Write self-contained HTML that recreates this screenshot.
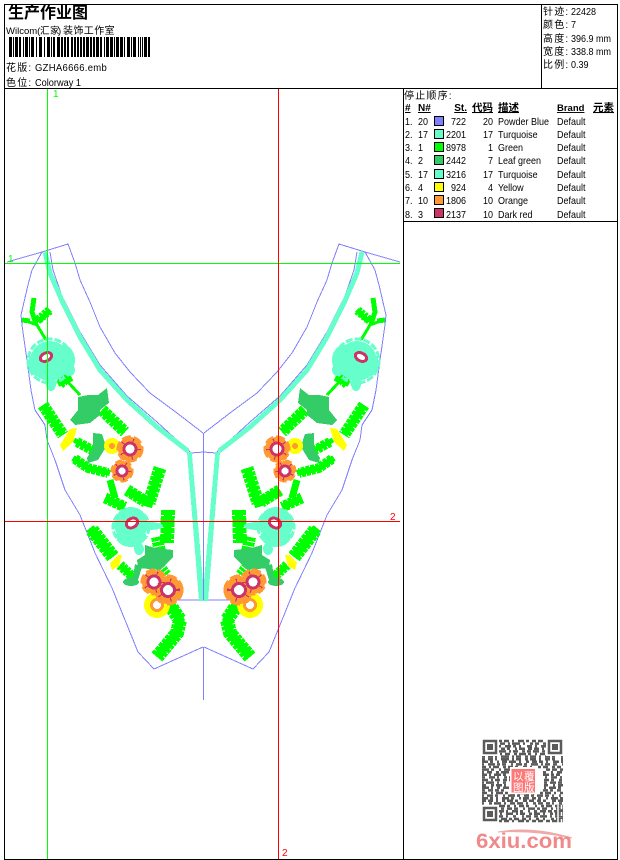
<!DOCTYPE html>
<html>
<head>
<meta charset="utf-8">
<style>
html,body{margin:0;padding:0;background:#fff;width:620px;height:860px;overflow:hidden}
svg{display:block}
text{font-family:"Liberation Sans","WenQuanYi Zen Hei","Noto Sans CJK SC",sans-serif;font-size:10px;fill:#000}
.c{font-size:10px;letter-spacing:1.2px}
.b{font-weight:bold;text-decoration:underline}
.f1{fill:none;stroke:#00ff00;stroke-linecap:butt}
</style>
</head>
<body>
<svg width="620" height="860" viewBox="0 0 620 860" xmlns="http://www.w3.org/2000/svg">
<defs>
<g id="half" shape-rendering="crispEdges">
  <!-- outlines -->
  <g fill="none" stroke="#8080ff" stroke-width="1">
    <polyline points="7,262 42,252 68,244 75,263 80,280 90,302 100,327 115,353 130,372 150,393 177,413 203,433"/>
    <polyline points="42,252 32,270 28,285 21,315 22,325 27,360 31,390 35,410 45,425 47,440 55,460 65,490 80,515 95,553 112,588 138,652 154,669 203,647"/>
    <polyline points="50,252 53,270 62,296 80,332 100,365 127,396 157,422 191,453 204,452"/>
    <line x1="177" y1="600" x2="204" y2="600"/>
  </g>
  <!-- teal band -->
  <polyline fill="none" stroke="#66ffcc" stroke-width="5" points="45,252 50,273 63,303 80,337 100,370 127,400 157,427 188,451"/>
  <polygon fill="#66ffcc" points="187,452 192,452 192,455 203.5,587 203.5,601 199,601"/>

  <!-- ferns: solid core + barbed stroke -->
  <g class="f1">
    <!-- top sprig -->
    <path d="M46 340 L37 325 L24 320" stroke-width="3"/>
    <path d="M22 320 L30 321" stroke-width="5"/>
    <path d="M36 324 L32 312 L34 298" stroke-width="5"/>
    <path d="M38 322 L50 310" stroke-width="5"/>
    <path d="M38 320 L50 310" stroke-width="9" stroke-dasharray="3 1"/>
    <!-- stem under flower 1 -->
    <path d="M66 380 L80 395" stroke-width="3"/>
    <path d="M58 384 L72 378" stroke-width="6"/>
    <path d="M60 384 L70 376" stroke-width="10" stroke-dasharray="3 1"/>
    <!-- right of leaf -->
    <path d="M102 410 L125 432" stroke-width="7"/>
    <path d="M102 410 L125 432" stroke-width="12" stroke-dasharray="4 1"/>
    <!-- far-left fern -->
    <path d="M43 405 L63 435" stroke-width="7"/>
    <path d="M43 405 L63 435" stroke-width="12" stroke-dasharray="4 1"/>
    <!-- mid -->
    <path d="M74 440 L98 453" stroke-width="5"/>
    <path d="M77 442 L94 451" stroke-width="10" stroke-dasharray="4 1"/>
    <path d="M73 458 L88 468 L110 473" stroke-width="6"/>
    <path d="M75 459 L88 468 L108 473" stroke-width="10" stroke-dasharray="4 1"/>
    <!-- upper trio -->
    <path d="M160 468 L148 507" stroke-width="8"/>
    <path d="M160 468 L149 503" stroke-width="13" stroke-dasharray="4 1"/>
    <path d="M127 490 L148 503" stroke-width="8"/>
    <path d="M127 490 L146 502" stroke-width="12" stroke-dasharray="4 1"/>
    <path d="M110 480 L115 498" stroke-width="7"/>
    <path d="M105 498 L125 507" stroke-width="7"/>
    <path d="M105 498 L125 507" stroke-width="11" stroke-dasharray="4 1"/>
    <!-- right of flower 2 -->
    <path d="M168 510 L167 543" stroke-width="8"/>
    <path d="M168 510 L167 543" stroke-width="14" stroke-dasharray="5 1"/>
    <path d="M157 537 L160 552" stroke-width="12" stroke-dasharray="4 1"/>
    <!-- lower-left fern -->
    <path d="M90 528 L113 557" stroke-width="9"/>
    <path d="M92 530 L113 557" stroke-width="14" stroke-dasharray="4 1"/>
    <path d="M120 565 L133 577" stroke-width="6"/>
    <path d="M120 565 L133 577" stroke-width="10" stroke-dasharray="3 1"/>
    <path d="M160 566 L167 575" stroke-width="10" stroke-dasharray="3 1"/>
    <!-- bottom fern -->
    <path d="M170 603 L180 620 L177 633 L157 657" stroke-width="9"/>
    <path d="M172 608 L180 620 L177 633 L157 657" stroke-width="14" stroke-dasharray="4 1"/>
  </g>

  <!-- leaves -->
  <g fill="#33cc66">
    <polygon points="107,388 109,403 100,410 100,415 90,423 75,425 70,420 78,410 78,397 88,395 98,395"/>
    <polygon points="93,433 102,434 104,440 106,447 98,460 88,463 87,458 93,448"/>
    <polygon points="145,545 155,548 173,550 173,557 160,570 138,568 137,560 145,555"/>
    <polygon points="125,578 138,580 142,567 135,564 133,577"/>
    <ellipse cx="131" cy="582" rx="8" ry="4"/>
  </g>

  <!-- yellow -->
  <g fill="#ffff00">
    <polygon points="70,429 77,428 73,442 63,451 60,445"/>
    <polygon points="118,555 122,555 119,566 112,570 110,563"/>
    <circle cx="112" cy="446" r="8"/>
    <circle cx="157" cy="605" r="13"/>
  </g>
  <circle cx="112" cy="446" r="3" fill="#ff9933"/>
  <circle cx="157" cy="605" r="7" fill="#ff9933"/>
  <circle cx="157" cy="605" r="4" fill="#fff"/>

  <!-- teal flowers -->
  <g fill="#66ffcc">
    <circle cx="50" cy="361" r="20"/>
    <ellipse cx="37" cy="364" rx="9" ry="12"/>
    <ellipse cx="63" cy="360" rx="12" ry="15"/>
    <ellipse cx="70" cy="370" rx="5" ry="6"/>
    <ellipse cx="51" cy="384" rx="5" ry="7"/>
    <circle cx="50" cy="361" r="22" fill="none" stroke="#66ffcc" stroke-width="3" stroke-dasharray="7 2"/>
    <circle cx="131" cy="524" r="17"/>
    <ellipse cx="150" cy="526" rx="13" ry="4"/>
    <ellipse cx="131" cy="536" rx="15" ry="11"/>
    <ellipse cx="139" cy="549" rx="5" ry="6"/>
    <circle cx="131" cy="527" r="18" fill="none" stroke="#66ffcc" stroke-width="3" stroke-dasharray="7 2"/>
  </g>
  <!-- pink centres -->
  <g>
    <ellipse cx="46" cy="357" rx="6" ry="4" fill="#fff" stroke="#cc3366" stroke-width="3" transform="rotate(-25 46 357)"/>
    <ellipse cx="132" cy="523" rx="6" ry="4.5" fill="#fff" stroke="#cc3366" stroke-width="3" transform="rotate(-30 132 523)"/>
  </g>

  <!-- orange flowers -->
  <g fill="#ff9933">
    <circle cx="130" cy="449" r="12"/>
    <circle cx="130" cy="449" r="12" fill="none" stroke="#ff9933" stroke-width="3" stroke-dasharray="9 3"/>
    <circle cx="122" cy="471" r="10"/>
    <circle cx="122" cy="471" r="10" fill="none" stroke="#ff9933" stroke-width="3" stroke-dasharray="7 3"/>
    <circle cx="154" cy="582" r="12"/>
    <circle cx="154" cy="582" r="12" fill="none" stroke="#ff9933" stroke-width="3" stroke-dasharray="9 3"/>
    <circle cx="168" cy="590" r="14"/>
    <circle cx="168" cy="590" r="14" fill="none" stroke="#ff9933" stroke-width="3" stroke-dasharray="10 3"/>
  </g>
  <g fill="#fff" stroke="#cc3366">
    <circle cx="130" cy="449" r="8" fill="none" stroke-width="6" stroke-dasharray="1 9"/>
    <circle cx="130" cy="449" r="6" stroke-width="3"/>
    <circle cx="122" cy="471" r="7" fill="none" stroke-width="5" stroke-dasharray="1 8"/>
    <circle cx="122" cy="471" r="5" stroke-width="3"/>
    <circle cx="154" cy="582" r="8" fill="none" stroke-width="6" stroke-dasharray="1 9"/>
    <circle cx="154" cy="582" r="6" stroke-width="3"/>
    <circle cx="168" cy="590" r="9" fill="none" stroke-width="6" stroke-dasharray="1 10"/>
    <circle cx="168" cy="590" r="6.5" stroke-width="3"/>
  </g>
</g>
</defs>

<rect width="620" height="860" fill="#fff"/>

<!-- embroidery -->
<use href="#half"/>
<use href="#half" transform="translate(407 0) scale(-1 1)"/>
<g shape-rendering="crispEdges">
<line x1="203.5" y1="433" x2="203.5" y2="600" stroke="#8080ff"/>
<line x1="203.5" y1="647" x2="203.5" y2="700" stroke="#8080ff"/>

<!-- crosshairs -->
  <line x1="47.5" y1="88" x2="47.5" y2="859" stroke="#00ff00"/>
  <line x1="4" y1="263.5" x2="400" y2="263.5" stroke="#00ff00"/>
  <line x1="278.5" y1="88" x2="278.5" y2="859" stroke="#ff0000"/>
  <line x1="4" y1="521.5" x2="400" y2="521.5" stroke="#ff0000"/>
  <!-- frame -->
  <g stroke="#000" fill="none">
    <rect x="4.5" y="4.5" width="613" height="855"/>
    <line x1="4" y1="88.5" x2="618" y2="88.5"/>
    <line x1="541.5" y1="4" x2="541.5" y2="88"/>
    <line x1="403.5" y1="88" x2="403.5" y2="860"/>
    <line x1="403" y1="221.5" x2="618" y2="221.5"/>
  </g>
</g>
<text x="53" y="97" style="fill:#00ff00">1</text>
<text x="8" y="262" style="fill:#00ff00">1</text>
<text x="390" y="520" style="fill:#ff0000">2</text>
<text x="282" y="856" style="fill:#ff0000">2</text>

<!-- header -->
<text x="8" y="18" style="font-size:16px;font-weight:bold">生产作业图</text>
<text x="6" y="34" style="font-size:9.5px">Wilcom(</text>
<text x="40" y="34" style="font-size:9.5px">汇</text>
<text x="50" y="34" style="font-size:9.5px">家</text>
<text x="58" y="34" style="font-size:9.5px">)</text>
<text x="63" y="34" style="font-size:10px;letter-spacing:.4px">装饰工作室</text>
<line x1="9" y1="47" x2="150" y2="47" stroke="#000" stroke-width="20" stroke-dasharray="3 1 1 1 3 1 2 2 1 1 3 1 1 1 3 2 1 2 3 2 1 2 3 1 1 1 2 2 3 1 2 1 2 1 2 2 2 1 2 1 2 1 2 1 2 1 3 1 2 1 2 1 3 1 2 2 1 1 3 1 3 1 1 1 3 1 3 1 1 2 3 1 1 1 3 2 1 1 1 1 1 1 3 1 2" shape-rendering="crispEdges"/>
<text x="6" y="71" class="c">花版:</text>
<text transform="translate(35 71) scale(.95 1)" style="letter-spacing:.3px">GZHA6666.emb</text>
<text x="6" y="86" class="c">色位:</text>
<text transform="translate(35 86) scale(.92 1)">Colorway 1</text>

<text x="543" y="15" class="c">针迹:</text>
<text x="543" y="28" class="c">颜色:</text>
<text x="543" y="42" class="c">高度:</text>
<text x="543" y="55" class="c">宽度:</text>
<text x="543" y="68" class="c">比例:</text>
<g transform="translate(571 0) scale(.9 1)">
  <text y="15">22428</text><text y="28">7</text><text y="42">396.9 mm</text><text y="55">338.8 mm</text><text y="68">0.39</text>
</g>

<!-- table -->
<text x="404" y="99" class="c">停止顺序:</text>
<text x="405" y="111" class="b">#</text>
<text x="418" y="111" class="b">N#</text>
<text x="467" y="111" class="b" text-anchor="end">St.</text>
<text x="472" y="111" class="b" style="font-size:10.5px">代码</text>
<text x="498" y="111" class="b" style="font-size:10.5px">描述</text>
<text x="557" y="111" class="b" style="font-size:9.5px">Brand</text>
<text x="593" y="111" class="b" style="font-size:10.5px">元素</text>

<g shape-rendering="crispEdges" stroke="#000">
  <rect x="434.5" y="116.5" width="9" height="9" fill="#8080ff"/>
  <rect x="434.5" y="129.5" width="9" height="9" fill="#66ffcc"/>
  <rect x="434.5" y="142.5" width="9" height="9" fill="#00ff00"/>
  <rect x="434.5" y="155.5" width="9" height="9" fill="#33cc66"/>
  <rect x="434.5" y="169.5" width="9" height="9" fill="#66ffcc"/>
  <rect x="434.5" y="182.5" width="9" height="9" fill="#ffff00"/>
  <rect x="434.5" y="195.5" width="9" height="9" fill="#ff9933"/>
  <rect x="434.5" y="208.5" width="9" height="9" fill="#cc3366"/>
</g>

<g transform="translate(405 0) scale(.9 1)">
  <text y="125">1.</text><text y="138">2.</text><text y="151">3.</text><text y="164">4.</text><text y="178">5.</text><text y="191">6.</text><text y="204">7.</text><text y="218">8.</text>
</g>
<g transform="translate(418 0) scale(.9 1)">
  <text y="125">20</text><text y="138">17</text><text y="151">1</text><text y="164">2</text><text y="178">17</text><text y="191">4</text><text y="204">10</text><text y="218">3</text>
</g>
<g transform="translate(466 0) scale(.9 1)" text-anchor="end">
  <text y="125">722</text><text y="138">2201</text><text y="151">8978</text><text y="164">2442</text><text y="178">3216</text><text y="191">924</text><text y="204">1806</text><text y="218">2137</text>
</g>
<g transform="translate(493 0) scale(.9 1)" text-anchor="end">
  <text y="125">20</text><text y="138">17</text><text y="151">1</text><text y="164">7</text><text y="178">17</text><text y="191">4</text><text y="204">10</text><text y="218">10</text>
</g>
<g transform="translate(498 0) scale(.9 1)">
  <text y="125">Powder Blue</text><text y="138">Turquoise</text><text y="151">Green</text><text y="164">Leaf green</text><text y="178">Turquoise</text><text y="191">Yellow</text><text y="204">Orange</text><text y="218">Dark red</text>
</g>
<g transform="translate(557 0) scale(.9 1)">
  <text y="125">Default</text><text y="138">Default</text><text y="151">Default</text><text y="164">Default</text><text y="178">Default</text><text y="191">Default</text><text y="204">Default</text><text y="218">Default</text>
</g>

<!-- QR -->
<g stroke="#5a5a5a" stroke-width="2.5" fill="none">
  <line x1="482" x2="563" y1="741" y2="741" stroke-dasharray="0 17 3 2 5 3 2 4 6 2 3 3 4 2 5 40"/>
  <line x1="482" x2="563" y1="743.6" y2="743.6" stroke-dasharray="0 18 5 3 2 2 8 3 2 5 3 2 4 4 3 40"/>
  <line x1="482" x2="563" y1="746.2" y2="746.2" stroke-dasharray="0 17 2 4 6 2 3 3 2 6 5 3 2 4 5 40"/>
  <line x1="482" x2="563" y1="748.8" y2="748.8" stroke-dasharray="0 19 4 2 3 5 2 2 6 3 4 2 5 3 2 40"/>
  <line x1="482" x2="563" y1="751.4" y2="751.4" stroke-dasharray="0 17 7 3 2 2 5 4 3 2 4 2 6 3 3 40"/>
  <line x1="482" x2="563" y1="754" y2="754" stroke-dasharray="0 18 2 3 5 4 3 2 7 2 3 4 2 3 5 40"/>
  <line x1="482" x2="563" y1="756.6" y2="756.6" stroke-dasharray="3 3 5 2 2 4 8 3 2 2 5 4 3 2 6 3 2 4 5 2 3 6"/>
  <line x1="482" x2="563" y1="759.2" y2="759.2" stroke-dasharray="3 3 5 2 2 4 8 3 2 2 5 4 3 2 6 3 2 4 5 2 3 6"/>
  <line x1="482" x2="563" y1="761.8" y2="761.8" stroke-dasharray="6 2 3 4 2 3 5 2 7 3 2 5 3 3 5 2 4 3 2 5 6 2"/>
  <line x1="482" x2="563" y1="764.4" y2="764.4" stroke-dasharray="2 4 7 2 3 2 4 5 2 3 6 2 3 4 7 3 2 2 5 3 4 5"/>
  <line x1="482" x2="563" y1="767" y2="767" stroke-dasharray="4 3 2 2 6 4 3 2 5 2 3 5 4 3 2 6 3 2 5 4 3 2"/>
  <line x1="482" x2="563" y1="769.6" y2="769.6" stroke-dasharray="7 2 3 5 2 3 6 2 3 4 3 24 4 2 5 3 6"/>
  <line x1="482" x2="563" y1="772.2" y2="772.2" stroke-dasharray="2 3 5 4 3 2 8 3 2 3 2 24 3 5 2 4 5"/>
  <line x1="482" x2="563" y1="774.8" y2="774.8" stroke-dasharray="5 2 2 3 7 2 3 5 2 3 3 24 6 2 3 2 4"/>
  <line x1="482" x2="563" y1="777.4" y2="777.4" stroke-dasharray="3 4 6 2 2 5 3 2 7 3 2 24 2 4 6 3 2"/>
  <line x1="482" x2="563" y1="780" y2="780" stroke-dasharray="6 3 2 2 5 3 4 2 6 2 3 24 5 2 3 5 3"/>
  <line x1="482" x2="563" y1="782.6" y2="782.6" stroke-dasharray="2 2 8 3 2 4 3 5 2 4 3 24 3 3 6 2 4"/>
  <line x1="482" x2="563" y1="785.2" y2="785.2" stroke-dasharray="4 5 3 2 6 2 2 4 5 3 2 24 4 5 2 3 5"/>
  <line x1="482" x2="563" y1="787.8" y2="787.8" stroke-dasharray="7 2 2 4 3 3 6 2 3 2 4 24 2 3 7 2 3"/>
  <line x1="482" x2="563" y1="790.4" y2="790.4" stroke-dasharray="3 3 5 2 4 2 3 6 2 4 3 24 5 2 3 4 4"/>
  <line x1="482" x2="563" y1="793" y2="793" stroke-dasharray="5 4 2 3 7 2 3 2 5 3 6 2 3 4 2 5 3 2 6 3 2 4"/>
  <line x1="482" x2="563" y1="795.6" y2="795.6" stroke-dasharray="2 3 6 2 3 5 2 3 7 2 3 4 5 2 3 3 6 2 4 3 2 5"/>
  <line x1="482" x2="563" y1="798.2" y2="798.2" stroke-dasharray="6 2 3 3 2 4 7 2 3 5 2 2 6 3 4 2 3 5 2 3 7 2"/>
  <line x1="482" x2="563" y1="800.8" y2="800.8" stroke-dasharray="4 2 5 3 2 4 3 2 6 2 3 5 4 2 5 3 4 2 3 6"/>
  <line x1="482" x2="563" y1="803.4" y2="803.4" stroke-dasharray="2 5 3 2 7 3 2 4 5 2 6 3 2 5 3 2 5 3 4 2"/>
  <line x1="482" x2="563" y1="806" y2="806" stroke-dasharray="0 17 6 2 3 4 2 3 5 2 3 6 2 4 3 2 6 3 4"/>
  <line x1="482" x2="563" y1="808.6" y2="808.6" stroke-dasharray="0 19 3 3 5 2 4 5 2 3 7 2 3 2 5 4 2 3 4"/>
  <line x1="482" x2="563" y1="811.2" y2="811.2" stroke-dasharray="0 17 5 2 2 4 6 2 3 5 2 4 3 3 6 2 4 2 5"/>
  <line x1="482" x2="563" y1="813.8" y2="813.8" stroke-dasharray="0 18 2 4 7 3 2 2 5 4 3 2 6 3 2 5 3 2 3"/>
  <line x1="482" x2="563" y1="816.4" y2="816.4" stroke-dasharray="0 17 4 3 2 5 3 6 2 2 5 3 4 2 7 3 2 3 4"/>
  <line x1="482" x2="563" y1="819" y2="819" stroke-dasharray="0 19 6 2 3 2 5 3 4 3 2 5 3 4 2 6 3 2 3"/>
  <line x1="482" x2="563" y1="821" y2="821" stroke-dasharray="0 17 3 2 5 3 2 4 6 2 3 3 4 2 5 3 4 2 6"/>
</g>
<g stroke="#fff" stroke-width="1.5">
  <line x1="558" y1="805" x2="558" y2="823"/>
  <line x1="561.5" y1="805" x2="561.5" y2="823" stroke-dasharray="4 3"/>
</g>
<g fill="#fff">
  <rect x="481" y="739" width="18" height="17"/>
  <rect x="546" y="739" width="18" height="17"/>
  <rect x="481" y="805" width="18" height="18"/>
</g>
<g fill="none" stroke="#5a5a5a" stroke-width="2.5">
  <rect x="484" y="741" width="12" height="12"/>
  <rect x="549" y="741" width="12" height="12"/>
  <rect x="484" y="808" width="12" height="12"/>
</g>
<g fill="#5a5a5a">
  <rect x="487" y="744" width="6" height="6"/>
  <rect x="552" y="744" width="6" height="6"/>
  <rect x="487" y="811" width="6" height="6"/>
</g>
<rect x="510" y="767" width="27" height="27" fill="#fff"/>
<rect x="511.5" y="769" width="23.5" height="23.5" fill="#ff7878"/>
<text x="513" y="780" style="font-size:10.5px;fill:#fff">以</text>
<text x="524" y="780" style="font-size:10.5px;fill:#fff">覆</text>
<text x="513" y="791" style="font-size:10.5px;fill:#fff">图</text>
<text x="524" y="791" style="font-size:10.5px;fill:#fff">版</text>
<!-- logo -->
<path d="M498 832 Q533 826 572 838 Q535 830 498 832Z" fill="#eeaaaa" stroke="#eeaaaa"/>
<text x="476" y="848" textLength="96" lengthAdjust="spacingAndGlyphs" style="font-size:21px;font-weight:bold;fill:#f08a8a">6xiu.com</text>
</svg>
</body>
</html>
